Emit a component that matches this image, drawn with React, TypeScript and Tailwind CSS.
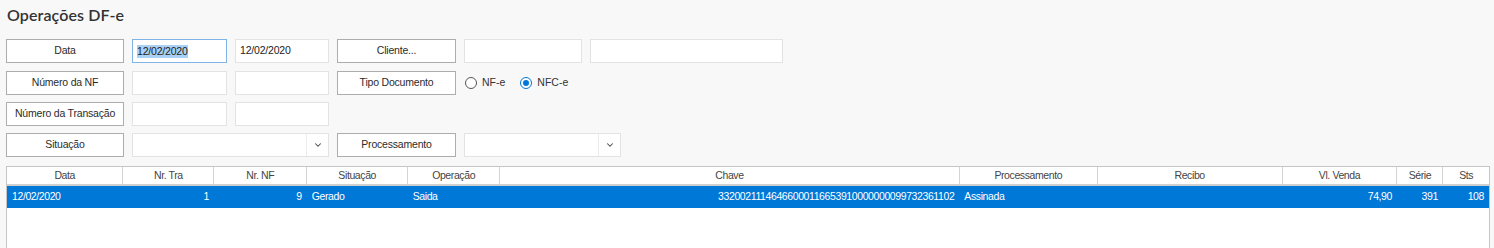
import { ChevronDown } from 'lucide-react';

const columns = [
    { label: 'Data', width: 116, align: 'text-left' },
    { label: 'Nr. Tra', width: 91, align: 'text-right' },
    { label: 'Nr. NF', width: 93, align: 'text-right' },
    { label: 'Situação', width: 101, align: 'text-left' },
    { label: 'Operação', width: 92, align: 'text-left' },
    { label: 'Chave', width: 460, align: 'text-right' },
    { label: 'Processamento', width: 138, align: 'text-left' },
    { label: 'Recibo', width: 185, align: 'text-left' },
    { label: 'Vl. Venda', width: 115, align: 'text-right' },
    { label: 'Série', width: 46, align: 'text-right' },
    { label: 'Sts', width: 46, align: 'text-right' },
];

const row = ['12/02/2020', '1', '9', 'Gerado', 'Saida', '33200211146466000116653910000000099732361102', 'Assinada', '', '74,90', '391', '108'];

function FieldButton({ label, w = 'w-[118px]' }: { label: string; w?: string }) {
    return (
        <button
            type="button"
            className={`${w} h-full bg-white border border-[#adadad] text-[#2b2b2b] text-[10.5px] tracking-[-0.2px] flex items-center justify-center`}
        >
            {label}
        </button>
    );
}

function Input({ w, value, focused }: { w: string; value?: string; focused?: boolean }) {
    return (
        <div
            className={`${w} h-full bg-white border ${focused ? 'border-[#7eb4ea]' : 'border-[#e3e3e3]'} flex items-center px-[4px] text-[10.5px] tracking-[-0.2px] text-[#222]`}
        >
            {value && (focused ? <span className="bg-[#a8d1f5] leading-[13px]">{value}</span> : <span>{value}</span>)}
        </div>
    );
}

function Select({ w }: { w: string }) {
    return (
        <div className={`${w} h-full bg-white border border-[#e3e3e3] flex`}>
            <div className="flex-1" />
            <div className="w-[22px] border-l border-[#ececec] flex items-center justify-center">
                <ChevronDown className="w-[10px] h-[10px] text-[#444]" strokeWidth={2.5} />
            </div>
        </div>
    );
}

function Radio({ label, checked }: { label: string; checked?: boolean }) {
    return (
        <label className="flex items-center gap-[5px] text-[10.5px] text-[#333]">
            <span
                className={`w-[12px] h-[12px] rounded-full border bg-white flex items-center justify-center ${checked ? 'border-[#0078d7]' : 'border-[#555]'}`}
            >
                {checked && <span className="w-[6px] h-[6px] rounded-full bg-[#0078d7]" />}
            </span>
            {label}
        </label>
    );
}

export default function App() {
    return (
        <div className="w-full h-[248px] overflow-hidden bg-[#f8f8f8] pl-[6px] pr-[5px] font-['Liberation_Sans',Arial,sans-serif]">
            <h1 className="pt-[4px] pl-[1px] h-[39px] text-[16px] leading-[22px] font-semibold tracking-[0.1px] text-[#333] font-['Lato',sans-serif]">
                Operações DF-e
            </h1>

            {/* Filtros */}
            <div className="flex gap-[8px] h-[24px]">
                <FieldButton label="Data" />
                <Input w="w-[95px]" value="12/02/2020" focused />
                <Input w="w-[94px]" value="12/02/2020" />
                <FieldButton label="Cliente..." w="w-[119px]" />
                <Input w="w-[118px]" />
                <Input w="w-[193px]" />
            </div>
            <div className="flex gap-[8px] h-[24px] mt-[8px]">
                <FieldButton label="Número da NF" />
                <Input w="w-[95px]" />
                <Input w="w-[94px]" />
                <FieldButton label="Tipo Documento" w="w-[119px]" />
                <div className="flex items-center gap-[15px] pl-[1px]">
                    <Radio label="NF-e" />
                    <Radio label="NFC-e" checked />
                </div>
            </div>
            <div className="flex gap-[8px] h-[24px] mt-[7px]">
                <FieldButton label="Número da Transação" />
                <Input w="w-[95px]" />
                <Input w="w-[94px]" />
            </div>
            <div className="flex gap-[8px] h-[24px] mt-[7px]">
                <FieldButton label="Situação" />
                <Select w="w-[197px]" />
                <FieldButton label="Processamento" w="w-[119px]" />
                <Select w="w-[157px]" />
            </div>

            {/* Grade */}
            <div className="mt-[9px] w-[1484px] h-[100px] bg-white border border-[#c6c6c6]">
                <table className="table-fixed border-collapse text-[10.5px] tracking-[-0.4px]">
                    <colgroup>
                        {columns.map((c) => (
                            <col key={c.label} style={{ width: c.width }} />
                        ))}
                    </colgroup>
                    <thead>
                        <tr className="h-[18px] border-b-2 border-[#d0d0d0]">
                            {columns.map((c) => (
                                <th key={c.label} className="font-normal text-[#444] text-center border-r border-[#d4d4d4] last:border-r-0">
                                    {c.label}
                                </th>
                            ))}
                        </tr>
                    </thead>
                    <tbody>
                        <tr className="h-[23px] bg-[#0078d7] text-white">
                            {row.map((v, i) => (
                                <td key={i} className={`${columns[i].align} px-[5px] whitespace-nowrap overflow-hidden`}>
                                    {v}
                                </td>
                            ))}
                        </tr>
                    </tbody>
                </table>
            </div>
        </div>
    );
}
